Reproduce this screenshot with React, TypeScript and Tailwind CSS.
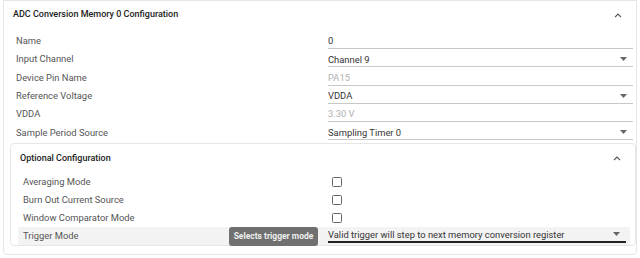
import { ReactNode } from "react";

const font = { fontFamily: "Roboto, 'Noto Sans', sans-serif" };

function ChevronUp() {
  return (
    <svg width="8" height="5" viewBox="0 0 8 5" className="text-[#555]">
      <path d="M1 4.2 L4 1.2 L7 4.2" fill="none" stroke="currentColor" strokeWidth="1.2" />
    </svg>
  );
}

function Caret() {
  return (
    <svg width="7" height="4" viewBox="0 0 7 4" className="text-[#666]">
      <path d="M0 0 H7 L3.5 4 Z" fill="currentColor" />
    </svg>
  );
}

function Field({
  value,
  disabled,
  select,
  active,
}: {
  value: string;
  disabled?: boolean;
  select?: boolean;
  active?: boolean;
}) {
  return (
    <div
      className={`flex h-[15px] items-center justify-between pr-[6px] ${
        active ? "border-b-2 border-[#222]" : "border-b border-[#c8c8c8]"
      } ${disabled ? "text-[#b0b0b0]" : "text-[#333]"}`}
    >
      <span className="leading-none">{value}</span>
      {select && <Caret />}
    </div>
  );
}

function Row({ label, children }: { label: string; children: ReactNode }) {
  return (
    <div className="grid h-[18.3px] grid-cols-[312px_305px] items-center">
      <span className="text-[#555]">{label}</span>
      <div className="self-start pt-[2px]">{children}</div>
    </div>
  );
}

function Checkbox() {
  return <div className="ml-[4px] h-[10px] w-[10px] rounded-[1.5px] border-[1.5px] border-[#666]" />;
}

export default function App() {
  return (
    <div className="h-[258px] w-[640px] bg-white text-[9.4px]" style={font}>
      <div className="mx-[3px] h-[255px] rounded-b-[4px] border border-[#e6e6e6]">
        <div className="flex h-[28px] items-center justify-between pl-[9px] pr-[14px]">
          <span className="text-[9px] font-medium text-[#222]">ADC Conversion Memory 0 Configuration</span>
          <ChevronUp />
        </div>
        <div className="pl-[12px] pt-[3px]">
          <Row label="Name">
            <Field value="0" />
          </Row>
          <Row label="Input Channel">
            <Field value="Channel 9" select />
          </Row>
          <Row label="Device Pin Name">
            <Field value="PA15" disabled />
          </Row>
          <Row label="Reference Voltage">
            <Field value="VDDA" select />
          </Row>
          <Row label="VDDA">
            <Field value="3.30 V" disabled />
          </Row>
          <Row label="Sample Period Source">
            <Field value="Sampling Timer 0" select />
          </Row>
        </div>
        <div className="ml-[6px] mt-[1px] h-[103px] rounded-[4px] border border-[#e6e6e6]">
          <div className="flex h-[29px] items-center justify-between pl-[9px] pr-[14px]">
            <span className="text-[9px] font-medium text-[#222]">Optional Configuration</span>
            <ChevronUp />
          </div>
          <div className="pl-[7px] pr-[5px]">
            {["Averaging Mode", "Burn Out Current Source", "Window Comparator Mode"].map((l) => (
              <div key={l} className="grid h-[18px] grid-cols-[305px_1fr] items-center pl-[5px]">
                <span className="text-[#555]">{l}</span>
                <Checkbox />
              </div>
            ))}
            <div className="relative grid h-[18px] grid-cols-[305px_1fr] items-center bg-[#f3f3f3] pl-[5px] pr-[4px]">
              <span className="text-[#555]">Trigger Mode</span>
              <div className="self-start pt-[1px]">
                <Field value="Valid trigger will step to next memory conversion register" select active />
              </div>
              <div className="absolute left-[211px] top-0 flex h-[19px] w-[89px] items-center justify-center rounded-[3px] bg-[#707070] text-[8.5px] font-bold text-[#eeeeee]">
                Selects trigger mode
              </div>
            </div>
          </div>
        </div>
      </div>
    </div>
  );
}
